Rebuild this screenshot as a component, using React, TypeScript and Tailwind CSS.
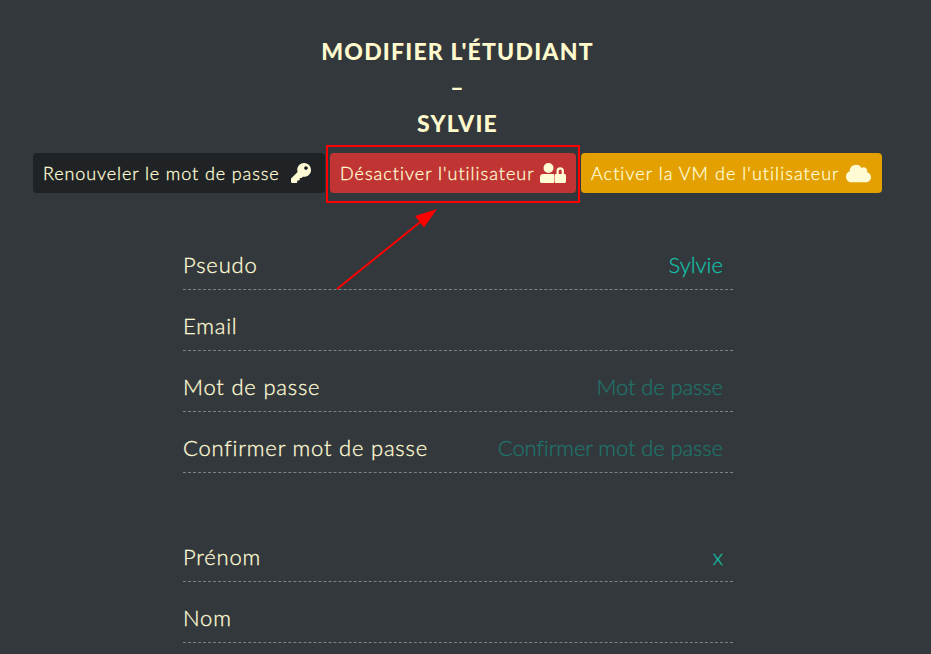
import React from 'react';
import { FaKey, FaCloud } from 'react-icons/fa';

const font = "font-['Lato','Noto_Sans',sans-serif]";
const thicken = '[-webkit-text-stroke:0.3px_currentColor]';

const UserLockIcon = () => (
  <svg width="26" height="20" viewBox="0 0 26 20" fill="currentColor" className="shrink-0">
    <circle cx="8.500" cy="5" r="5" />
    <path d="M3 11h9.500c.600 0 1.200.100 1.500.300V20H1.500C.700 20 0 19.300 0 18.500V14c0-1.700 1.300-3 3-3z" />
    <path d="M16.500 11V8a3.700 3.700 0 0 1 7.400 0v3h.600c.800 0 1.500.700 1.500 1.500v6c0 .800-.700 1.500-1.500 1.500h-8.500c-.800 0-1.500-.700-1.500-1.500v-6c0-.800.700-1.500 1.500-1.500h.500zm2.200 0h3V8a1.500 1.500 0 0 0-3 0v3z" fillRule="evenodd" />
  </svg>
);

const Row = ({ label, value, placeholder }: { label: string; value?: string; placeholder?: string }) => (
  <div className="flex h-[61px] items-center justify-between border-b border-dashed border-[#7d8286] pr-2.5 pt-[11px]">
    <label className={`text-[22px] font-light tracking-[0.8px] text-[#fffbd5] ${thicken}`}>{label}</label>
    {value && <span className={`text-[22px] font-light text-[#13bfa6] ${thicken}`}>{value}</span>}
    {placeholder && <span className={`text-[22px] font-light tracking-[-0.1px] text-[#20736a] ${thicken}`}>{placeholder}</span>}
  </div>
);

export default function App() {
  return (
    <div className={`relative h-[654px] overflow-hidden bg-[#33383c] ${font}`}>
      <div className="flex w-[915px] flex-col items-center pt-[33px] text-[23px] font-black leading-[36px] tracking-[1.2px] text-[#fffacd]">
        <h1>MODIFIER L'ÉTUDIANT</h1>
        <span>–</span>
        <span>SYLVIE</span>
      </div>

      <div className={`mt-[12px] flex gap-[5px] pl-[33px] text-[18px] font-light whitespace-nowrap text-[#fffbd5] ${thicken}`}>
        <button className="flex h-10 w-[292px] items-center gap-[11px] rounded bg-[#1f2326] px-2.5 tracking-[0.9px]">
          Renouveler le mot de passe <FaKey size={20} />
        </button>
        <button className="flex h-10 w-[246px] items-center gap-[5px] rounded bg-[#c03533] px-2.5 tracking-[1px]">
          Désactiver l'utilisateur <UserLockIcon />
        </button>
        <button className="flex h-10 w-[301px] items-center gap-1.5 rounded bg-[#e3a000] px-2.5 tracking-[1.05px]">
          Activer la VM de l'utilisateur <FaCloud size={25} />
        </button>
      </div>

      <div className="ml-[183px] mt-[36px] w-[550px]">
        <Row label="Pseudo" value="Sylvie" />
        <Row label="Email" />
        <Row label="Mot de passe" placeholder="Mot de passe" />
        <Row label="Confirmer mot de passe" placeholder="Confirmer mot de passe" />
        <div className="h-[48px]" />
        <Row label="Prénom" value="x" />
        <Row label="Nom" />
      </div>

      {/* annotation on top of the screenshot */}
      <div className="absolute left-[326px] top-[145px] h-[58px] w-[254px] border-2 border-[#ff0000]" />
      <svg className="absolute inset-0" width="931" height="654" fill="none">
        <line x1="337" y1="289" x2="424" y2="219" stroke="#ff0000" strokeWidth="2" />
        <polygon points="437,209 424,227.5 415,216" fill="#ff0000" />
      </svg>
    </div>
  );
}
